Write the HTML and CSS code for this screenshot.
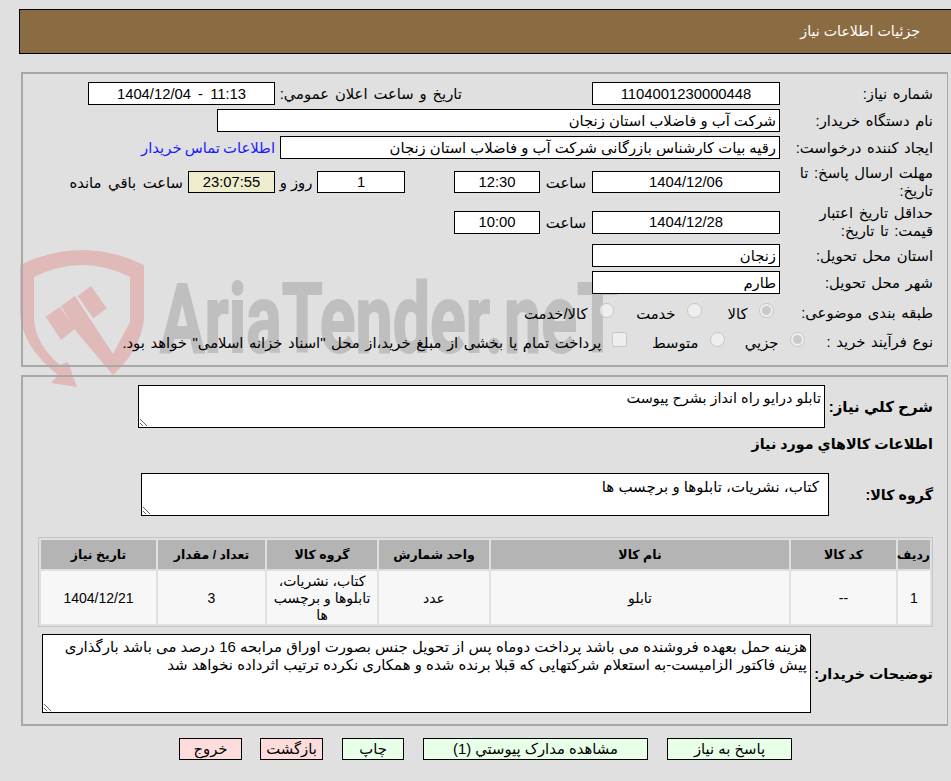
FILE: index.html
```html
<!DOCTYPE html>
<html lang="fa" dir="rtl">
<head>
<meta charset="utf-8">
<title>جزئیات اطلاعات نیاز</title>
<link rel="stylesheet" href="styles.css">
</head>
<body>
<svg class="watermark" width="640" height="160" viewBox="0 0 640 160" aria-hidden="true">
  <path class="wm-red" d="M20 30Q82 0 144 30L144 85Q140 115 113 140L113 119L130 87L130 42Q82 18 34 42L34 85Q36 110 60 130L68 127L77 152L51 148L58 140Q20 110 20 75Z"/>
  <path class="wm-red" d="M45.7 81.7L60 71.7L75 94L61 105ZM61 71L75 61L92 87L113 119L113 140L75 95ZM77.7 61L91 51L106.7 73.3L93.3 83.3Z"/>
  <text class="wm-text" x="160" y="117" textLength="458" lengthAdjust="spacingAndGlyphs">AriaTender.neT</text>
</svg>
<header class="title-bar">جزئیات اطلاعات نیاز</header>

<section class="panel panel-top">
  <div class="row">
    <label class="lbl">شماره نیاز:</label>
    <input class="fld w188 c" value="1104001230000448" readonly>
    <span class="lbl2 announce">تاریخ و ساعت اعلان عمومي:</span>
    <input class="fld w187 c wide-gap" dir="ltr" value="1404/12/04 - 11:13" readonly>
  </div>
  <div class="row">
    <label class="lbl">نام دستگاه خریدار:</label>
    <input class="fld w563" value="شرکت آب و فاضلاب استان زنجان" readonly>
  </div>
  <div class="row">
    <label class="lbl">ایجاد کننده درخواست:</label>
    <input class="fld w500" value="رقیه بیات کارشناس بازرگانی شرکت آب و فاضلاب استان زنجان" readonly>
    <a class="contact" href="#">اطلاعات تماس خریدار</a>
  </div>
  <div class="row row-date">
    <label class="lbl">مهلت ارسال پاسخ: تا تاریخ:</label>
    <input class="fld w188 c short" value="1404/12/06" readonly>
    <span class="lbl2 hour">ساعت</span>
    <input class="fld w86 c short" value="12:30" readonly>
    <input class="fld w88 c days short" value="1" readonly>
    <span class="lbl2 roz">روز و</span>
    <input class="fld w87 c timer short" value="23:07:55" readonly>
    <span class="lbl2 remain">ساعت باقي مانده</span>
  </div>
  <div class="row">
    <label class="lbl">حداقل تاریخ اعتبار قیمت: تا تاریخ:</label>
    <input class="fld w188 c" value="1404/12/28" readonly>
    <span class="lbl2 hour">ساعت</span>
    <input class="fld w86 c" value="10:00" readonly>
  </div>
  <div class="row">
    <label class="lbl">استان محل تحویل:</label>
    <input class="fld w188" value="زنجان" readonly>
  </div>
  <div class="row">
    <label class="lbl">شهر محل تحویل:</label>
    <input class="fld w188" value="طارم" readonly>
  </div>
  <div class="row row-opt">
    <label class="lbl">طبقه بندی موضوعی:</label>
    <span class="opt o1"><input type="radio" name="a" checked disabled>کالا</span>
    <span class="opt o2"><input type="radio" name="a" disabled>خدمت</span>
    <span class="opt o3"><input type="radio" name="a" disabled>کالا/خدمت</span>
  </div>
  <div class="row row-opt">
    <label class="lbl lbl-narrow">نوع فرآیند خرید :</label>
    <span class="opt o4"><input type="radio" name="b" checked disabled>جزیي</span>
    <span class="opt o5"><input type="radio" name="b" disabled>متوسط</span>
    <span class="opt o6"><input type="checkbox" disabled>پرداخت تمام یا بخشی از مبلغ خرید،از محل "اسناد خزانه اسلامی" خواهد بود.</span>
  </div>
</section>

<section class="panel panel-bottom">
  <div class="row tarow">
    <label class="lblb w-sharh">شرح کلي نیاز:</label>
    <textarea class="ta ta1" readonly>تابلو درایو راه انداز بشرح پیوست</textarea>
  </div>
  <h3 class="subhead">اطلاعات کالاهاي مورد نیاز</h3>
  <div class="row tarow group">
    <label class="lblb w-group">گروه کالا:</label>
    <textarea class="ta ta2" readonly>کتاب، نشریات، تابلوها و برچسب ها</textarea>
  </div>
  <table class="items">
    <thead>
      <tr><th class="c1">ردیف</th><th class="c2">کد کالا</th><th class="c3">نام کالا</th><th class="c4">واحد شمارش</th><th class="c5">گروه کالا</th><th class="c6">تعداد / مقدار</th><th class="c7">تاریخ نیاز</th></tr>
    </thead>
    <tbody>
      <tr><td>1</td><td>--</td><td>تابلو</td><td>عدد</td><td>کتاب، نشریات،<br>تابلوها و برچسب<br>ها</td><td>3</td><td>1404/12/21</td></tr>
    </tbody>
  </table>
  <div class="row tarow desc">
    <label class="lblb w-desc">توضیحات خریدار:</label>
    <textarea class="ta ta3" readonly>هزینه حمل بعهده فروشنده می باشد پرداخت دوماه پس از تحویل جنس بصورت اوراق مرابحه 16 درصد می باشد بارگذاری پیش فاکتور الزامیست-به استعلام شرکتهایی که قبلا برنده شده و همکاری نکرده ترتیب اثرداده نخواهد شد</textarea>
  </div>
</section>

<nav class="actions">
  <button class="btn green b1">پاسخ به نیاز</button>
  <button class="btn green b2">مشاهده مدارک پیوستي (1)</button>
  <button class="btn green b3">چاپ</button>
  <button class="btn red b4">بازگشت</button>
  <button class="btn red b5">خروج</button>
</nav>
</body>
</html>
```
FILE: styles.css
```css
* { box-sizing: border-box; }
html, body { margin: 0; height: 781px; overflow: hidden; }
body {
  background: #e0e0e0;
  color: #000;
  font: 14.8px "Liberation Sans", "DejaVu Sans", sans-serif;
  position: relative;
  padding-top: 9px;
}
input, textarea, button { font: inherit; color: #000; }
.watermark { position: absolute; left: 0; top: 235px; z-index: 0; }
.wm-red { fill: #e0b9b9; }
.wm-text { fill: #bfbfbf; stroke: #bfbfbf; stroke-width: 2px; font: bold 97px "Roboto", sans-serif; direction: ltr; }
.title-bar, .panel, .actions { position: relative; z-index: 1; }
.title-bar {
  height: 45px;
  margin: 0 -2px 0 19px;
  background: #8b6b42;
  border: 1px solid #000;
  color: #fff;
  font-size: 14.2px;
  line-height: 43px;
  padding-right: 32px;
}
.panel {
  margin: 0 3px 0 21px;
  border-style: solid;
  border-width: 2px 1px 2px 2px;
  border-color: #a8a8a8;
}
.panel-top { margin-top: 18px; height: 295px; padding: 8px 14px 0 0; }
.panel-bottom { margin-top: 8px; height: 351px; padding: 8px 14px 0 0; }
.row { display: flex; align-items: center; margin-bottom: 4px; }
.row-date { margin-top: 5px; }
.row-opt { height: 20px; margin-top: 9px; margin-bottom: 0; }
.lbl { width: 153px; flex: none; line-height: 18px; padding-left: 4px; word-spacing: 1.5px; }
.lbl-narrow { width: 128px; padding-left: 0; }
.fld {
  height: 23px;
  border: 1px solid #000;
  background: #fff;
  padding: 0 3px;
  border-radius: 0;
  outline: none;
}
.short { height: 22px; }
.c { text-align: center; }
.wide-gap { word-spacing: 3px; }
.w188 { width: 188px; }
.w187 { width: 187px; }
.w563 { width: 563px; }
.w500 { width: 500px; }
.w86 { width: 86px; }
.w88 { width: 88px; }
.w87 { width: 87px; }
.lbl2 { flex: none; white-space: nowrap; }
.announce { width: 187px; margin-right: 130px; word-spacing: 1.75px; }
.contact { color: #1a1aff; text-decoration: none; margin-right: 5px; word-spacing: -1px; }
.hour { width: 52px; text-align: center; }
.days { margin-right: 49px; }
.roz { width: 42px; text-align: center; }
.timer { background: #eeeecf; }
.remain { margin-right: 5px; word-spacing: 2.5px; }
.opt { display: inline-flex; align-items: center; flex: none; white-space: nowrap; }
.opt input { margin: 0 0 0 11.5px; width: 15px; height: 15px; position: relative; top: -3px; }
.o1 { margin-right: 6px; width: 72px; }
.o2 { width: 88px; }
.o4 { width: 80px; }
.o5 { width: 98px; }
.o6 { word-spacing: 1.5px; }
.o6 input { margin-left: 10.5px; }
.lblb { font-weight: bold; flex: none; font-size: 14.3px; white-space: nowrap; }
.ta {
  border: 1px solid #000;
  background: #fff;
  border-radius: 0;
  outline: none;
  padding: 3px 3px 2px;
  resize: both;
  line-height: 18px;
  flex: none;
}
.w-sharh { width: 108px; font-size: 15px; }
.ta1 { width: 687px; height: 43px; font-size: 14.4px; }
.subhead { margin: 6px 0 19px; font-size: 14.3px; line-height: 20px; }
.w-group { width: 104px; }
.ta2 { width: 688px; height: 43px; padding: 4px 9px 2px 3px; font-size: 15px; }
.items {
  width: 895px;
  margin: 21px 0 0 0;
  border: 1px solid #c4c4c4;
  border-spacing: 2px;
  border-collapse: separate;
  table-layout: fixed;
}
.items th { background: #b4b4b4; height: 29px; padding: 0; font-size: 12.5px; }
.items td { background: #f7f7f7; height: 53px; padding: 2px 2px 0; text-align: center; line-height: 17px; font-size: 14px; }
.c1 { width: 32px; }
.c2 { width: 105px; }
.c3 { width: 298px; }
.c4 { width: 110px; }
.c5 { width: 110px; }
.c6 { width: 107px; }
.c7 { width: 115px; }
.desc { margin-top: 7px; }
.w-desc { width: 122px; }
.ta3 { width: 769px; height: 79px; padding-left: 15px; font-size: 14.95px; }
.actions { display: flex; margin-top: 12px; padding-right: 159px; word-spacing: 1.5px; }
.btn {
  height: 22px;
  border: 1px solid #000;
  border-radius: 0;
  padding: 0;
  line-height: 18px;
  flex: none;
}
.green { background: #e8ffe8; }
.red { background: #ffdcdc; }
.b1 { width: 125px; }
.b2 { width: 225px; margin-right: 19px; }
.b3 { width: 62px; margin-right: 19px; }
.b4 { width: 63px; margin-right: 19px; }
.b5 { width: 63px; margin-right: 18px; }
```
